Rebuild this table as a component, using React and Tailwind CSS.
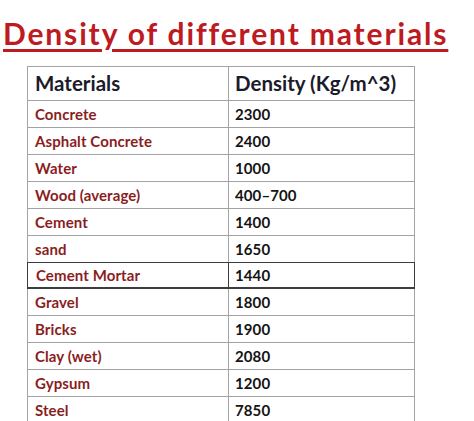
const rows = [
  ['Concrete', '2300'],
  ['Asphalt Concrete', '2400'],
  ['Water', '1000'],
  ['Wood (average)', '400–700'],
  ['Cement', '1400'],
  ['sand', '1650'],
  ['Cement Mortar', '1440', true],
  ['Gravel', '1800'],
  ['Bricks', '1900'],
  ['Clay (wet)', '2080'],
  ['Gypsum', '1200'],
  ['Steel', '7850'],
];

export default function App() {
  return (
    <div className="w-[474px] h-[421px] overflow-hidden bg-white font-['Lato',sans-serif]">
      <h1 className="pl-[3px] pt-[15px] h-[66px] text-[30px] leading-[36px] font-bold text-[#bd1a22] tracking-[1.85px]">
        <span className="underline decoration-[3px] underline-offset-[4px]">Density of different materials</span>
      </h1>

      <div className="ml-[27px] w-[388px] border-t border-l border-r border-[#a3a3a3]">
        <div className="flex h-[34px] border-b border-[#a3a3a3] text-[20.5px] font-bold text-[#1b1b2b]">
          <div className="w-[201px] pl-[7px] flex items-center border-r border-[#a3a3a3]">Materials</div>
          <div className="flex-1 pl-[6px] flex items-center">Density (Kg/m^3)</div>
        </div>
        {rows.map(([name, value, dark]) => (
          <div
            key={name}
            className={
              dark
                ? 'flex h-[27px] border-b-2 border-t border-[#3d3d3d] -mt-px -mx-px border-x text-[15px] font-bold tracking-[0.1px]'
                : 'flex h-[27px] border-b border-[#a3a3a3] text-[15px] font-bold tracking-[0.1px]'
            }
          >
            <div
              className={
                dark
                  ? 'w-[201px] pl-[8px] flex items-center border-r border-[#3d3d3d] text-[#8a1e1e]'
                  : 'w-[201px] pl-[7px] flex items-center border-r border-[#a3a3a3] text-[#8a1e1e]'
              }
            >
              {name}
            </div>
            <div className="flex-1 pl-[6px] flex items-center text-[#141414]">{value}</div>
          </div>
        ))}
      </div>
    </div>
  );
}
